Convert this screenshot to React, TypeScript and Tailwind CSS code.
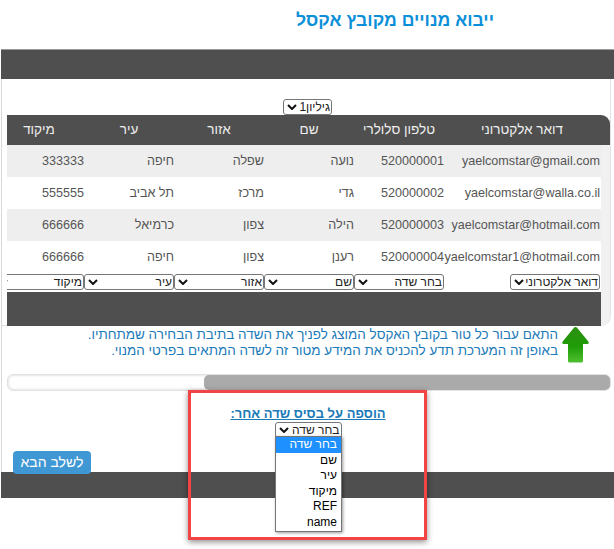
const headers = ["דואר אלקטרוני", "טלפון סלולרי", "שם", "אזור", "עיר", "מיקוד"];

const rows = [
  ["yaelcomstar@gmail.com", "520000001", "נועה", "שפלה", "חיפה", "333333"],
  ["yaelcomstar@walla.co.il", "520000002", "גדי", "מרכז", "תל אביב", "555555"],
  ["yaelcomstar@hotmail.com", "520000003", "הילה", "צפון", "כרמיאל", "666666"],
  ["yaelcomstar1@hotmail.com", "520000004", "רענן", "צפון", "חיפה", "666666"],
];

const fieldSelects = ["דואר אלקטרוני", "בחר שדה", "שם", "אזור", "עיר", "מיקוד"];
const menuOptions = ["בחר שדה", "שם", "עיר", "מיקוד", "REF", "name"];

const gridCols = "grid grid-cols-[156px_repeat(5,90px)]";

function FieldSelect({ value, width }: { value: string; width: string }) {
  return (
    <div className={`relative h-[16px] ${width}`}>
      <select className="block h-[16px] w-full appearance-none rounded-[3px] border border-[#767676] bg-white py-0 pl-[14px] pr-[1px] text-[12px] leading-none text-[#222]">
        <option>{value}</option>
      </select>
      <svg width="10" height="6" viewBox="0 0 10 6" className="pointer-events-none absolute left-[4px] top-[5px]">
        <path d="M1 1 L5 5 L9 1" fill="none" stroke="#111" strokeWidth="2" />
      </svg>
    </div>
  );
}

function UpArrow() {
  return (
    <svg width="27" height="36" viewBox="0 0 27 36" className="shrink-0">
      <defs>
        <linearGradient id="arrowGreen" x1="0" y1="0" x2="0" y2="1">
          <stop offset="0" stopColor="#2b8f10" />
          <stop offset="0.55" stopColor="#1f9c08" />
          <stop offset="1" stopColor="#4fc030" />
        </linearGradient>
      </defs>
      <path
        d="M13.5 0 Q14.5 0 15.5 1.2 L26.3 14.5 Q27.6 17 25 17 L21 17 L21 34 Q21 35.5 19.5 35.5 L7.5 35.5 Q6 35.5 6 34 L6 17 L2 17 Q-0.6 17 0.7 14.5 L11.5 1.2 Q12.5 0 13.5 0 Z"
        fill="url(#arrowGreen)"
      />
    </svg>
  );
}

export default function App() {
  return (
    <div dir="rtl" className="relative w-[614px] h-[549px] overflow-hidden bg-white font-['Liberation_Sans',Arial,sans-serif]">
      <div className="h-[49px] pr-[120px] pt-[8px]">
        <h1 className="text-[17.6px] leading-[24px] font-bold text-[#0b8fd8]">ייבוא מנויים מקובץ אקסל</h1>
      </div>

      {/* top bar */}
      <div className="ml-[1px] h-[30px] border-t border-[#9a9a9a] bg-[#4f4f4f]"></div>

      <div className="ml-[1px] h-[393px] border-l border-[#d8d8d8]">
        {/* table panel */}
        <div className="mr-[3px] h-[247px] rounded-br-[10px] border-r border-b border-[#e2e2e2] pl-[5px] pt-[20px]">
          <div className="flex h-[16px] justify-center pr-[2px]">
            <FieldSelect value="גיליון1" width="w-[49px]" />
          </div>
          <div className="overflow-hidden rounded-tr-[9px] rounded-br-[9px] bg-[#f1f1f1]">
            <div className="bg-[#4f4f4f] pr-[9px]">
              <div className={`${gridCols} h-[30px] items-center pr-[1px] text-center text-[13.5px] text-[#eeeeee]`}>
                {headers.map((h) => (
                  <div key={h}>{h}</div>
                ))}
              </div>
            </div>
            <div className="mr-[9px] bg-white">
              {rows.map((row, i) => (
                <div key={row[0]} className={`${gridCols} h-[32px] items-center pr-[1px] text-[12.6px] text-[#555555] ${i % 2 === 0 ? "bg-[#eeeeee]" : "bg-white"}`}>
                  {row.map((cell, j) => (
                    <div key={j} className="whitespace-nowrap">{cell}</div>
                  ))}
                </div>
              ))}
              <div className={`${gridCols} h-[19px] pr-[1px] pt-[1px]`}>
                {fieldSelects.map((s, i) => (
                  <FieldSelect key={i} value={s} width="w-[90px]" />
                ))}
              </div>
              <div className="h-[34px] bg-[#4f4f4f]"></div>
            </div>
          </div>
        </div>

        {/* instructions */}
        <div className="flex h-[48px] gap-[4px] pr-[25px] pt-[1px]">
          <UpArrow />
          <p className="text-[13.45px] leading-[16px] text-[#1b7ab8]">
            התאם עבור כל טור בקובץ האקסל המוצג לפניך את השדה בתיבת הבחירה שמתחתיו.
            <br />
            באופן זה המערכת תדע להכניס את המידע מטור זה לשדה המתאים בפרטי המנוי.
          </p>
        </div>

        {/* progress */}
        <div className="ml-[5px] mr-[3px] h-[17px] overflow-hidden rounded-[6px] border border-[#e2e2e2] bg-white shadow-[inset_0_0_3px_rgba(0,0,0,0.2)]">
          <div className="h-full w-[406px] rounded-l-[5px] bg-[#aaaaaa]"></div>
        </div>

        {/* add based on another field */}
        <div className="relative mt-[15px] h-[66px]">
          <div className="flex flex-col items-center">
            <a className="text-[13px] leading-[16px] font-bold text-[#1b7ab8] underline">הוספה על בסיס שדה אחר:</a>
            <FieldSelect value="בחר שדה" width="w-[67px]" />
          </div>
          <button className="absolute bottom-[-2px] left-[11px] z-10 h-[23px] w-[78px] rounded-[4px] bg-[#3f97d3] text-[14px] text-white">
            לשלב הבא
          </button>
        </div>
      </div>

      {/* bottom bar */}
      <div className="ml-[1px] h-[26px] bg-[#4f4f4f]"></div>

      {/* open dropdown */}
      <ul className="absolute left-[275px] top-[436px] z-20 w-[67px] border border-[#767676] bg-white text-[12px] leading-[15.6px] text-black shadow-[1px_1px_3px_rgba(0,0,0,0.4)]">
        {menuOptions.map((o, i) => (
          <li key={o} className={`h-[15.6px] pr-[4px] ${i === 0 ? "bg-[#1e90ff] text-white" : ""}`}>
            {o}
          </li>
        ))}
      </ul>

      {/* red annotation box */}
      <div className="pointer-events-none absolute left-[188px] top-[390px] z-30 h-[150px] w-[239px] border-[3px] border-[#f24444] shadow-[0_2px_6px_rgba(0,0,0,0.45)]"></div>
    </div>
  );
}
